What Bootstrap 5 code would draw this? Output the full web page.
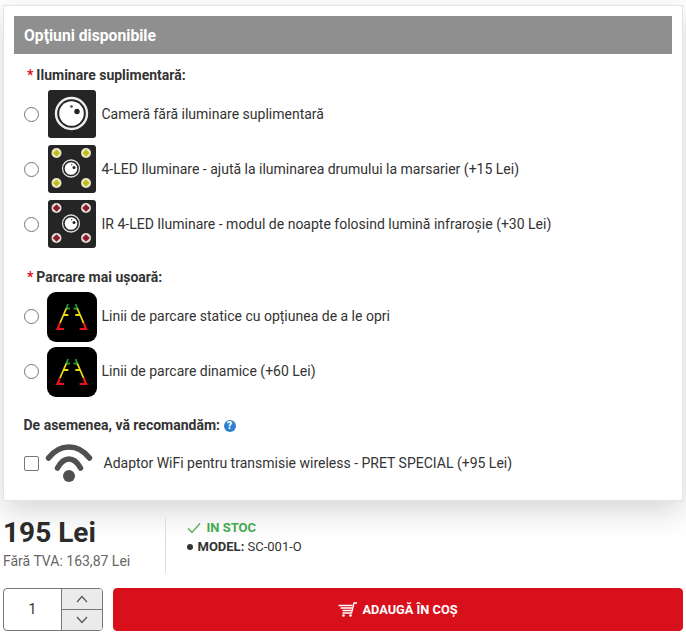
<!DOCTYPE html>
<html lang="ro">
<head>
<meta charset="utf-8">
<title>Opțiuni disponibile</title>
<link href="https://cdn.jsdelivr.net/npm/bootstrap@5.3.0/dist/css/bootstrap.min.css" rel="stylesheet">
<style>
html,body{height:100%;overflow:hidden}
body{font-family:Roboto,"Liberation Sans",sans-serif;font-size:14px;color:#333;background:#fff;padding:5px 3px 0}
.opt-panel{border:1px solid #e4e4e4;background:#fff;padding:10px 10px 0;height:496px;box-shadow:0 10px 30px rgba(0,0,0,.17)}
.opt-head{background:#8f8f8f;color:#fff;font-weight:700;font-size:15.7px;height:38px;line-height:39px;padding-left:10px}
.opt-group{padding-left:9.5px}
.opt-label{font-weight:700;font-size:14px;color:#333;line-height:20px;margin-top:19px;margin-bottom:5px}
.opt-label-first{margin-top:11px}
.opt-star{color:#d8101c;margin:0 3px 0 3.5px;font-weight:700}
.opt-row{height:48px;margin-bottom:7px}
.opt-row2{height:49px;margin-bottom:6px}
.opt-row .form-check-input,.opt-row2 .form-check-input,.opt-row3 .form-check-input{width:15px;height:15px;margin:0;flex:none;border:1px solid #767676;float:none}
.opt-row3 .form-check-input{border-radius:2px}
.opt-icon{width:48px;height:48px;margin:0 6px 0 9px;flex:none;display:block}
.opt-icon2{width:50px;height:50px;margin:0 5px 0 8px;flex:none;display:block}
.opt-icon3{width:48px;height:46px;margin:0 11px 0 6px;flex:none;display:block}
.opt-row3{height:46px}
.qm{display:inline-block;width:12px;height:12px;border-radius:50%;background:#2f80d0;color:#fff;font-size:10px;font-weight:900;line-height:12px;text-align:center;vertical-align:1px}
.buy-info{margin-top:17px;height:55px}
.price-col{width:162.5px;border-right:1px solid #ddd}
.price-big{font-size:28px;font-weight:700;line-height:30px;color:#2b2b2b}
.price-sub{color:#666;font-size:14px;line-height:20px;margin-top:3px}
.stock-col{padding-left:21px}
.stock-in{color:#45a94f;font-weight:700;font-size:13px;line-height:18px;margin-top:1px;gap:6px}
.model-row{font-size:13px;line-height:20px;color:#333}
.model-dot{display:inline-block;width:6px;height:6px;border-radius:50%;background:#333;margin-right:5px;vertical-align:1px}
.buy-row{margin-top:15px;height:43px;gap:10px}
.qty-box{width:100px;border:1px solid #777;border-radius:4px;overflow:hidden;flex:none}
.qty-val{width:58px;text-align:center;font-size:14px;color:#333;line-height:41px;border-right:1px solid #777}
.qty-btns{flex:1;background:#ebebeb}
.qty-btn{flex:1;padding:0;border:0;border-radius:0;background:#ebebeb;display:flex;align-items:center;justify-content:center}
.qty-btn+.qty-btn{border-top:1px solid #777}
.add-btn{flex:1;background:#d8101c;border-color:#d8101c;color:#fff;font-weight:700;font-size:12.8px;border-radius:4px;padding:0 1px 0 0}
.add-btn:hover{background:#d8101c;color:#fff}
</style>
</head>
<body>
<svg width="0" height="0" class="d-none"><defs>
  <g id="lens-small"><circle cx="23" cy="23.500" r="8.500" fill="none" stroke="#ddd" stroke-width="1.300"/><circle cx="23" cy="23.500" r="6.300" fill="#fff"/><circle cx="26" cy="22.500" r="1.500" fill="#222"/><circle cx="23.700" cy="19.800" r=".7" fill="#444"/></g>
  <g id="park-lines" fill="none" stroke-width="1.800"><path d="M21 12 19.300 16.500H23M28.600 12 30.300 16.500H26.600" stroke="#1f9a3c"/><path d="M19.300 16.500 13 31M16.500 23H21.300M30.300 16.500 36.600 31M33.100 23H28.300" stroke="#e8dc10"/><path d="M13 31 10.500 37H17M36.600 31 39.100 37H32.600" stroke="#e8141c" stroke-width="2.200"/></g>
</defs></svg>
<div class="opt-panel">
  <div class="opt-head">Opţiuni disponibile</div>
  <div class="opt-group">
    <div class="opt-label opt-label-first"><span class="opt-star">*</span>Iluminare suplimentară:</div>
    <label class="opt-row d-flex align-items-center">
      <input class="form-check-input" type="radio" name="a">
      <svg class="opt-icon" viewBox="0 0 48 48"><rect width="48" height="48" rx="3" fill="#252525"/><circle cx="23.500" cy="23.500" r="15.500" fill="none" stroke="#eee" stroke-width="2.400"/><circle cx="23.500" cy="23.500" r="12.300" fill="#fff"/><circle cx="29" cy="21.500" r="2.700" fill="#222"/><circle cx="23.500" cy="16.500" r="1.300" fill="#444"/></svg>
      <span>Cameră fără iluminare suplimentară</span>
    </label>
    <label class="opt-row d-flex align-items-center">
      <input class="form-check-input" type="radio" name="a">
      <svg class="opt-icon" viewBox="0 0 48 48"><rect width="48" height="48" rx="3" fill="#252525"/><g fill="#ece6c8"><circle cx="8.500" cy="8" r="5"/><circle cx="38" cy="8" r="5"/><circle cx="8.500" cy="38" r="5"/><circle cx="38" cy="38" r="5"/></g><g fill="#bdbf12"><path d="M8.500 4.500 12 8 8.500 11.500 5 8zM38 4.500 41.500 8 38 11.500 34.500 8zM8.500 34.500 12 38 8.500 41.500 5 38zM38 34.500 41.500 38 38 41.500 34.500 38z"/></g><use href="#lens-small"/></svg>
      <span>4-LED Iluminare - ajută la iluminarea drumului la marsarier (+15 Lei)</span>
    </label>
    <label class="opt-row d-flex align-items-center">
      <input class="form-check-input" type="radio" name="a">
      <svg class="opt-icon" viewBox="0 0 48 48"><rect width="48" height="48" rx="3" fill="#252525"/><g fill="#e6dcd6"><circle cx="8.500" cy="8" r="5"/><circle cx="38" cy="8" r="5"/><circle cx="8.500" cy="38" r="5"/><circle cx="38" cy="38" r="5"/></g><g fill="#8e1c2b"><path d="M8.500 4.200 12.300 8 8.500 11.800 4.700 8zM38 4.200 41.800 8 38 11.800 34.200 8zM8.500 34.200 12.300 38 8.500 41.800 4.700 38zM38 34.200 41.800 38 38 41.800 34.200 38z"/></g><use href="#lens-small"/></svg>
      <span>IR 4-LED Iluminare - modul de noapte folosind lumină infraroșie (+30 Lei)</span>
    </label>
    <div class="opt-label"><span class="opt-star">*</span>Parcare mai ușoară:</div>
    <label class="opt-row2 d-flex align-items-center">
      <input class="form-check-input" type="radio" name="b">
      <svg class="opt-icon2" viewBox="0 0 50 50"><rect width="50" height="50" rx="9" fill="#000"/><use href="#park-lines"/></svg>
      <span>Linii de parcare statice cu opțiunea de a le opri</span>
    </label>
    <label class="opt-row2 d-flex align-items-center">
      <input class="form-check-input" type="radio" name="b">
      <svg class="opt-icon2" viewBox="0 0 50 50"><rect width="50" height="50" rx="9" fill="#000"/><use href="#park-lines"/></svg>
      <span>Linii de parcare dinamice (+60 Lei)</span>
    </label>
    <div class="opt-label">De asemenea, vă recomandăm: <span class="qm">?</span></div>
    <label class="opt-row3 d-flex align-items-center">
      <input class="form-check-input" type="checkbox">
      <svg class="opt-icon3" viewBox="0 0 48 46"><g fill="none" stroke="#505050" stroke-width="5.500" stroke-linecap="round"><path d="M3.500 18C15 3.300 33 3.300 44.500 18"/><path d="M12.500 28C19 16 29 16 35.500 28"/></g><circle cx="24" cy="36" r="6" fill="#505050"/></svg>
      <span>Adaptor WiFi pentru transmisie wireless - PRET SPECIAL (+95 Lei)</span>
    </label>
  </div>
</div>
<div class="buy-info d-flex">
  <div class="price-col">
    <div class="price-big">195 Lei</div>
    <div class="price-sub">Fără TVA: 163,87 Lei</div>
  </div>
  <div class="stock-col">
    <div class="stock-in d-flex align-items-center"><svg width="14" height="12" viewBox="0 0 14 12"><path d="M1 6.500 5 10.500 13 1.500" fill="none" stroke="#45a94f" stroke-width="1.200"/></svg><span>IN STOC</span></div>
    <div class="model-row"><span class="model-dot"></span><b>MODEL:</b> SC-001-O</div>
  </div>
</div>
<div class="buy-row d-flex">
  <div class="qty-box d-flex">
    <div class="qty-val">1</div>
    <div class="qty-btns d-flex flex-column">
      <button class="qty-btn" type="button" aria-label="Plus"><svg width="12" height="8" viewBox="0 0 12 8"><path d="M1 7 6 1.500 11 7" fill="none" stroke="#555" stroke-width="1.200"/></svg></button>
      <button class="qty-btn" type="button" aria-label="Minus"><svg width="12" height="8" viewBox="0 0 12 8"><path d="M1 1 6 6.500 11 1" fill="none" stroke="#555" stroke-width="1.200"/></svg></button>
    </div>
  </div>
  <button class="btn add-btn d-flex align-items-center justify-content-center" type="button">
    <svg width="21" height="15" viewBox="0 0 20 15" class="me-1"><g fill="none" stroke="#fff" stroke-width="1.400"><path d="M19.500 1H16.500L14 11H5"/><path d="M1 3.500H15M3 6H14.500M5 8.500H14"/></g><circle cx="6" cy="13.500" r="1.300" fill="#fff"/><circle cx="13" cy="13.500" r="1.300" fill="#fff"/></svg>
    ADAUGĂ ÎN COȘ
  </button>
</div>
<script src="https://cdn.jsdelivr.net/npm/bootstrap@5.3.0/dist/js/bootstrap.bundle.min.js"></script>
</body>
</html>
